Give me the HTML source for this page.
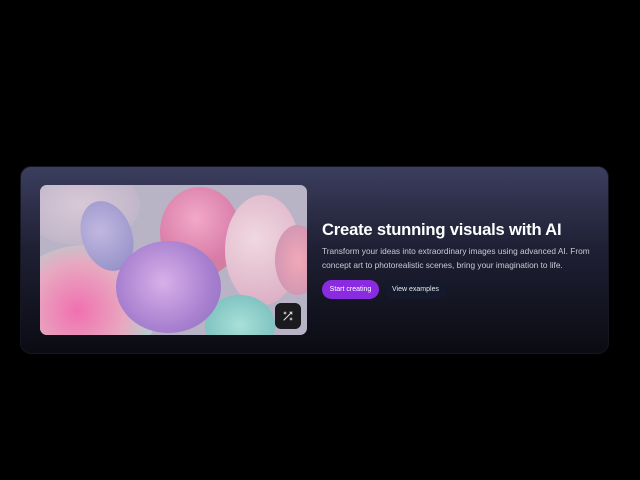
<!DOCTYPE html>
<html><head><style>
body{margin:0;width:640px;height:480px;background:#000;overflow:hidden;font-family:"Liberation Sans",sans-serif}
.card{position:absolute;left:20px;top:166px;width:589px;height:188px;border-radius:11px;background:linear-gradient(180deg,#3b3e5e 0%,#1e1f33 45%,#0b0b13 100%);border:1px solid #15161f;box-sizing:border-box}
.img{position:absolute;left:40px;top:185px;width:267px;height:150px;border-radius:7px;overflow:hidden;background:#b9b3c6}
.b{position:absolute;border-radius:50%}
.btn{position:absolute;left:275px;top:303px;width:26px;height:26px;border-radius:6px;background:#1a1a1f}
h1{position:absolute;left:322px;top:220px;margin:0;color:#fff;font-size:16.6px;font-weight:bold;letter-spacing:-0.2px}
p{position:absolute;left:322px;top:244px;margin:0;color:#c9cbd6;font-size:8.3px;line-height:14px;width:285px}
.s{position:absolute;left:322px;top:280px;width:57px;height:19px;border-radius:10px;background:#8a2be2;color:#fff;font-size:7px;line-height:19px;text-align:center}
.v{position:absolute;left:385px;top:280px;width:61px;height:19px;border-radius:10px;background:#141a2c;color:#e6e8ef;font-size:7px;line-height:19px;text-align:center}
</style></head><body>
<div class="card"></div>
<div class="img">
<div class="b" style="left:-20px;top:-20px;width:120px;height:80px;background:radial-gradient(#d8c9d6,#b8aec4);"></div>
<div class="b" style="left:-30px;top:60px;width:150px;height:120px;background:radial-gradient(circle at 45% 55%,#f070b0,#e8a8c0 45%,#a8d8d0 80%);"></div>
<div class="b" style="left:42px;top:15px;width:50px;height:72px;background:radial-gradient(circle at 40% 40%,#c0b8e0,#8e8ac4);transform:rotate(-20deg)"></div>
<div class="b" style="left:120px;top:2px;width:80px;height:90px;background:radial-gradient(circle at 45% 35%,#f2a8c8,#d87ca8 60%,#c88090);"></div>
<div class="b" style="left:185px;top:10px;width:75px;height:110px;background:radial-gradient(circle at 40% 40%,#f0d8e0,#d8a8c0);"></div>
<div class="b" style="left:235px;top:40px;width:45px;height:70px;background:radial-gradient(#f0a8b8,#c890b0);"></div>
<div class="b" style="left:165px;top:110px;width:70px;height:60px;background:radial-gradient(#a8e0d8,#70b8b8);"></div>
<div class="b" style="left:76px;top:56px;width:105px;height:92px;background:radial-gradient(circle at 45% 45%,#d8b0e8,#a880d0 60%,#9070c0);"></div>
</div>
<div class="btn"><svg width="26" height="26" viewBox="0 0 26 26"><path d="M9 17l8-8M15 9l2 2M10 9v2M9 10h2M16 15v2M15 16h2" stroke="#ddd" stroke-width="1.1" fill="none" stroke-linecap="round"/></svg></div>
<h1>Create stunning visuals with AI</h1>
<p>Transform your ideas into extraordinary images using advanced AI. From concept art to photorealistic scenes, bring your imagination to life.</p>
<div class="s">Start creating</div>
<div class="v">View examples</div>
</body></html>
